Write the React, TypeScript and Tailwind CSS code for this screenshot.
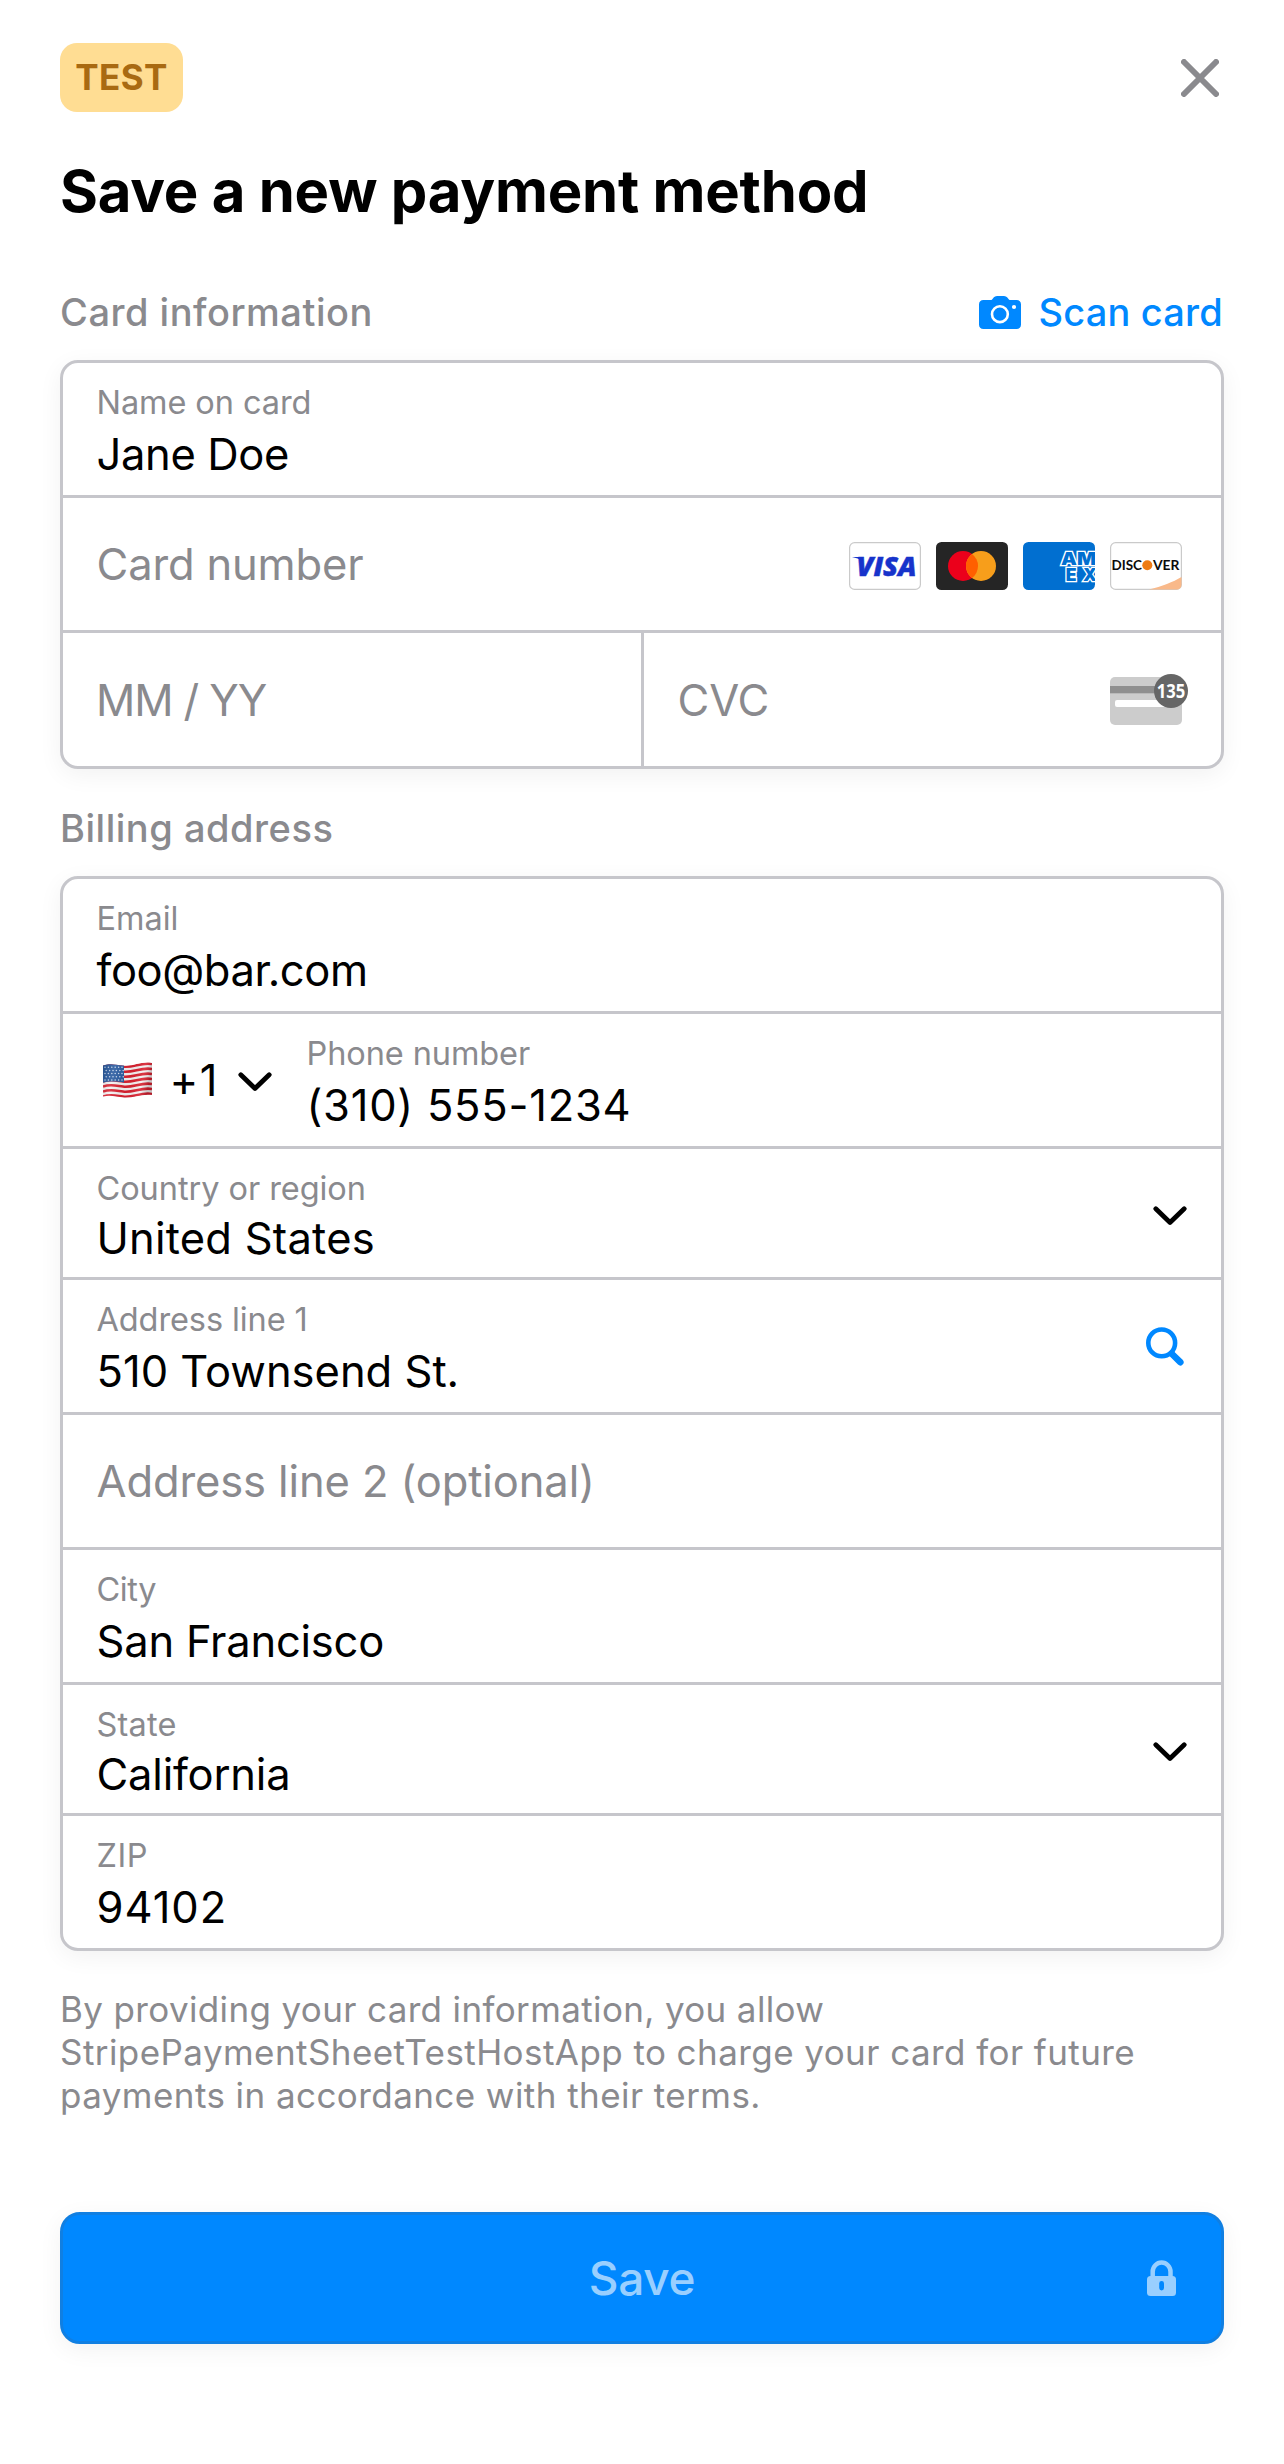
import type { ReactNode } from "react";

const label = "text-[32.5px] leading-[32px] text-[#8a8a8e] whitespace-nowrap";
const value = "text-[43.5px] leading-[44px] text-black whitespace-nowrap";
const placeholder = "text-[43.5px] leading-[44px] text-[#8a8a8e] whitespace-nowrap";
const panel =
  "flex flex-col divide-y-3 divide-[#c6c6cb] rounded-[18px] border-3 border-[#c6c6cb] bg-white shadow-[0_6px_24px_rgba(0,0,0,0.055)]";

function Chevron({ className }: { className: string }) {
  return (
    <svg viewBox="0 0 34 20" className={className} fill="none" stroke="#000" strokeWidth="4.8" strokeLinecap="round" strokeLinejoin="round">
      <path d="M2.8 2.8 17 16.4 31.2 2.8" />
    </svg>
  );
}

function CloseIcon() {
  return (
    <svg viewBox="0 0 38 38" className="h-[38px] w-[38px]" fill="none" stroke="#8a8a8e" strokeWidth="6" strokeLinecap="round">
      <path d="M3 3 35 35M35 3 3 35" />
    </svg>
  );
}

function CameraIcon() {
  return (
    <svg viewBox="0 0 42 33" className="h-[33px] w-[42px]">
      <path
        fill="#0088ff"
        d="M4.5 4h7.2c1 0 1.4-.4 2-1.2C15 1 16.2 0 18.2 0h6.6c2 0 3.2 1 4.5 2.8.6.8 1 1.2 2 1.2h6.200C40.3 4 42 5.700 42 8.500v20C42 31.300 40.300 33 37.500 33h-33C1.700 33 0 31.300 0 28.500v-20C0 5.700 1.700 4 4.500 4z"
      />
      <circle cx="20.9" cy="18.2" r="7.9" fill="none" stroke="#fff" strokeWidth="2.6" />
      <circle cx="35" cy="11" r="2.1" fill="#fff" />
    </svg>
  );
}

function SearchIcon() {
  return (
    <svg viewBox="0 0 38 39" className="h-[39px] w-[38px]" fill="none" stroke="#0088ff" strokeLinecap="round">
      <circle cx="15.700" cy="15.900" r="13.400" strokeWidth="4.600" />
      <path d="M26 27 34.300 35.200" strokeWidth="6.600" />
    </svg>
  );
}

function LockIcon() {
  return (
    <svg viewBox="0 0 29 36" className="h-[36px] w-[29px]">
      <path d="M5.700 16v-4.300a8.900 9.200 0 0 1 17.800 0V16" fill="none" stroke="#99cfff" strokeWidth="4.500" />
      <rect y="16" width="29" height="20" rx="3.500" fill="#99cfff" />
      <rect x="12.200" y="21" width="4.800" height="9.500" rx="2.400" fill="#0088ff" />
    </svg>
  );
}

function Flag() {
  return (
    <svg viewBox="0 0 49 36" className="h-[36px] w-[49px]">
      <defs>
        <clipPath id="wave">
          <path d="M0 3.500C7 1 12 2.500 20 3.500 30 5 38-1 49 1V33c-10-1.500-18 3-28 2.500C13 35 8 32.500 0 34.500z" />
        </clipPath>
        <linearGradient id="shade" x1="0" x2="1" y1="0" y2="0.150">
          <stop offset="0" stopColor="#000" stopOpacity="0.140" />
          <stop offset="0.250" stopColor="#fff" stopOpacity="0.120" />
          <stop offset="0.600" stopColor="#000" stopOpacity="0.040" />
          <stop offset="0.850" stopColor="#fff" stopOpacity="0.100" />
          <stop offset="1" stopColor="#000" stopOpacity="0.180" />
        </linearGradient>
      </defs>
      <g clipPath="url(#wave)">
        <rect width="49" height="36" fill="#f4f0f1" />
        {[0, 1, 2, 3, 4, 5, 6].map((i) => (
          <path
            key={i}
            transform={`translate(0 ${i * 5})`}
            d="M0 4.500C7 2 12 3.500 20 4.500 30 6 38 0 49 2"
            fill="none"
            stroke="#d8202f"
            strokeWidth="2.600"
          />
        ))}
        <path d="M0 0H21V20.500C13 19.500 8 19 0 20.700z" fill="#27599f" />
        {[0, 1, 2, 3, 4].map((r) =>
          [0, 1, 2, 3, 4, 5].map((c) => (
            <circle key={`${r}-${c}`} cx={2 + c * 3.4 + (r % 2) * 1.2} cy={5.2 + r * 3.2} r="0.750" fill="#c9d8ee" />
          )),
        )}
        <rect width="49" height="36" fill="url(#shade)" />
      </g>
    </svg>
  );
}

function Visa() {
  return (
    <svg viewBox="0 0 72 48" className="h-12 w-[72px]">
      <rect x="0.600" y="0.600" width="70.800" height="46.800" rx="5" fill="#fff" stroke="#cacaca" strokeWidth="1.200" />
      <text x="7.500" y="34.300" textLength="60" lengthAdjust="spacingAndGlyphs" fontFamily="Open Sans" fontStyle="italic" fontWeight="800" fontSize="27" fill="#1733cb" stroke="#1733cb" strokeWidth="0.5">
        VISA
      </text>
      <path d="M3 15h9.500l1.500 4C10.500 17 7 15.800 3 15z" fill="#1733cb" />
    </svg>
  );
}

function Mastercard() {
  return (
    <svg viewBox="0 0 72 48" className="h-12 w-[72px]">
      <rect width="72" height="48" rx="5.500" fill="#252525" />
      <circle cx="27" cy="24" r="15" fill="#eb001b" />
      <circle cx="45" cy="24" r="15" fill="#f79e1b" />
      <path d="M36 12a15 15 0 0 1 0 24 15 15 0 0 1 0-24z" fill="#ff5f00" />
    </svg>
  );
}

function Amex() {
  return (
    <svg viewBox="0 0 72 48" className="h-12 w-[72px]">
      <defs>
        <clipPath id="amex">
          <rect width="72" height="48" rx="5.500" />
        </clipPath>
      </defs>
      <g clipPath="url(#amex)" fontFamily="Inter" fontWeight="900" fill="#016fd0" stroke="#fff" strokeWidth="2.600" paintOrder="stroke">
        <rect width="72" height="48" fill="#016fd0" stroke="none" />
        <text x="38" y="22.600" fontSize="17.500" textLength="35" lengthAdjust="spacingAndGlyphs">AM</text>
        <text x="42.800" y="38.700" fontSize="17.500" textLength="31" lengthAdjust="spacing">EX</text>
      </g>
    </svg>
  );
}

function Discover() {
  return (
    <svg viewBox="0 0 72 48" className="h-12 w-[72px]">
      <rect x="0.600" y="0.600" width="70.800" height="46.800" rx="5" fill="#fff" stroke="#cacaca" strokeWidth="1.200" />
      <path d="M39 47.500C52 44.500 63 40 71.500 35v7.500c0 3-2 5-5 5z" fill="#f9b98a" />
      <g fontFamily="Lato" fontWeight="700" fontSize="13.400" fill="#0b0b0b">
        <text x="1.500" y="27.900" textLength="30.500" lengthAdjust="spacingAndGlyphs">DISC</text>
        <text x="43" y="27.900" textLength="26.500" lengthAdjust="spacingAndGlyphs">VER</text>
      </g>
      <circle cx="37.300" cy="23.200" r="5" fill="#ee7b15" />
    </svg>
  );
}

function CvcIcon() {
  return (
    <svg viewBox="0 0 78 52" className="h-[52px] w-[78px]">
      <rect y="3" width="72" height="48" rx="5" fill="#cccccc" />
      <rect y="12" width="72" height="7.300" fill="#8f8f8f" />
      <rect x="5" y="26" width="58" height="7" rx="2" fill="#fff" />
      <circle cx="61" cy="17" r="17" fill="#666666" />
      <text x="61" y="23.800" textAnchor="middle" textLength="28.500" lengthAdjust="spacingAndGlyphs" fontFamily="Noto Sans" fontWeight="700" fontSize="19.300" fill="#fff">
        135
      </text>
    </svg>
  );
}

function Field({ name, nameCls = "", children, valueCls = "", select, icon }: {
  name: string; nameCls?: string; children: ReactNode; valueCls?: string; select?: boolean; icon?: ReactNode;
}) {
  return (
    <div className={`flex justify-between pl-[33.5px] ${select ? "h-[131px]" : "h-[135px]"}`}>
      <div className="pt-6">
        <div className={`${label} ${nameCls}`}>{name}</div>
        <div className={`${value} ${select ? "mt-[11px]" : "mt-[13px]"} ${valueCls}`}>{children}</div>
      </div>
      {icon}
    </div>
  );
}

export default function App() {
  return (
    <main className="h-[2464px] w-[1284px] bg-white px-[60px] pt-[43px] font-['Inter',sans-serif]">
      <header className="flex h-[69px] items-center justify-between">
        <div className="flex h-[69px] w-[123px] items-center justify-center rounded-[17px] bg-[#ffdd93] pb-0.5 text-[35px] leading-[40px] font-bold tracking-[0.42px] text-[#a96a12]">
          TEST
        </div>
        <div className="pr-[5px]">
          <CloseIcon />
        </div>
      </header>

      <h1 className="mt-[43.5px] text-[58px] leading-[70px] font-bold tracking-[-0.2px] whitespace-nowrap text-black">
        Save a new payment method
      </h1>

      <div className="mt-[63.5px] flex h-[46px] items-center justify-between text-[38px] leading-[46px] font-medium">
        <h2 className="tracking-[0.51px] text-[#8a8a8e]">Card information</h2>
        <div className="flex items-center gap-[17px] pr-px tracking-[0.2px] text-[#0088ff]">
          <CameraIcon />
          Scan card
        </div>
      </div>

      <section className={`mt-[25px] ${panel}`}>
        <Field name="Name on card" nameCls="tracking-[-0.087px]" valueCls="tracking-[-0.35px]">Jane Doe</Field>
        <div className="flex h-[135px] items-center justify-between pr-[39px] pl-[33.5px]">
          <span className={`${placeholder} tracking-[-0.15px]`}>Card number</span>
          <div className="flex gap-[15px] pt-[3px]">
            <Visa />
            <Mastercard />
            <Amex />
            <Discover />
          </div>
        </div>
        <div className="flex h-[133px] divide-x-3 divide-[#c6c6cb]">
          <div className="flex w-[581px] items-center pl-[33px]">
            <span className={`${placeholder} tracking-[-1.1px]`}>MM / YY</span>
          </div>
          <div className="flex flex-1 items-center justify-between pr-[33px] pl-[33.5px]">
            <span className={`${placeholder} tracking-[-0.1px]`}>CVC</span>
            <CvcIcon />
          </div>
        </div>
      </section>

      <h2 className="mt-[36px] text-[38px] leading-[46px] font-medium tracking-[0.52px] text-[#8a8a8e]">Billing address</h2>

      <section className={`mt-[25px] ${panel}`}>
        <Field name="Email" valueCls="tracking-[-0.42px]">foo@bar.com</Field>
        <div className="flex h-[135px] pl-[39.5px]">
          <div className="flex items-center">
            <Flag />
            <span className={`${value} ml-[18px] tracking-[1.5px]`}>+1</span>
            <Chevron className="mt-[4px] ml-[19.5px] h-[20px] w-[34px]" />
          </div>
          <div className="pt-6 pl-[34px]">
            <div className={`${label} tracking-[-0.09px]`}>Phone number</div>
            <div className={`${value} mt-[13px] tracking-[0.74px]`}>(310) 555-1234</div>
          </div>
        </div>
        <Field select name="Country or region" nameCls="tracking-[-0.06px]" valueCls="tracking-[0.22px]" icon={<Chevron className="mt-[57px] mr-[34px] h-[20px] w-[34px]" />}>
          United States
        </Field>
        <Field name="Address line 1" nameCls="tracking-[-0.1px]" valueCls="tracking-[0px]" icon={<div className="mt-[46.500px] mr-[37px]"><SearchIcon /></div>}>
          510 Townsend St.
        </Field>
        <div className="flex h-[135px] items-center pl-[33.5px]">
          <span className={`${placeholder} tracking-[-0.11px]`}>Address line 2 (optional)</span>
        </div>
        <Field name="City" nameCls="tracking-[-0.4px]" valueCls="tracking-[-0.22px]">San Francisco</Field>
        <Field select name="State" nameCls="tracking-[0.2px]" valueCls="tracking-[-0.2px]" icon={<Chevron className="mt-[57px] mr-[34px] h-[20px] w-[34px]" />}>
          California
        </Field>
        <div className="h-[132px] pt-6 pl-[33.5px]">
          <div className={`${label} tracking-[0.5px]`}>ZIP</div>
          <div className={`${value} mt-[13px] tracking-[0.95px]`}>94102</div>
        </div>
      </section>

      <p className="mt-[36.5px] text-[35px] leading-[43px] whitespace-nowrap text-[#8a8a8e]">
        <span className="block tracking-[0.36px]">By providing your card information, you allow</span>
        <span className="block tracking-[0.43px]">StripePaymentSheetTestHostApp to charge your card for future</span>
        <span className="block tracking-[0.43px]">payments in accordance with their terms.</span>
      </p>

      <button className="relative mt-[95.5px] flex h-[132px] w-full items-center justify-center rounded-[20px] border-3 border-[#107fe2] bg-[#0088ff] pb-px text-[46px] leading-[56px] font-medium tracking-[-0.3px] text-[#99cfff] shadow-[0_6px_24px_rgba(0,0,0,0.055)]">
        Save
        <span className="absolute top-[45px] right-[45px]">
          <LockIcon />
        </span>
      </button>
    </main>
  );
}
